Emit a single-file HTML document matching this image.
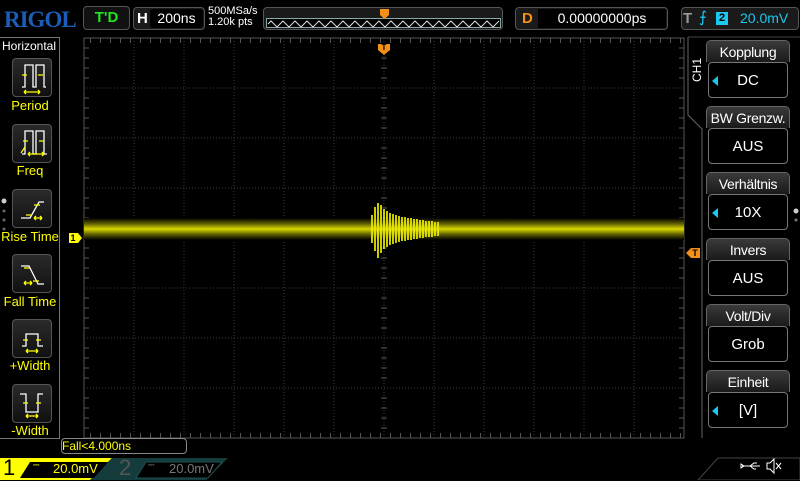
<!DOCTYPE html>
<html><head><meta charset="utf-8"><style>
*{margin:0;padding:0;box-sizing:border-box}
body{width:800px;height:480px;background:#000;overflow:hidden;position:relative;font-family:"Liberation Sans",sans-serif;color:#fff}
.a{position:absolute}
.box{position:absolute;border:1px solid #555;border-radius:4px;background:#0a0a0a}
.lb{position:absolute;left:0;width:60px;text-align:center;color:#ff0;font-size:13px;white-space:nowrap}
.ib{position:absolute;left:12px;width:40px;height:39px;border:1px solid #555;border-radius:4px;background:linear-gradient(#2a2a2a,#111)}
.rt{position:absolute;left:706px;width:84px;height:22px;border:1px solid #666;border-bottom:none;border-radius:5px 5px 0 0;background:linear-gradient(#3a3a3a,#1a1a1a);text-align:center;font-size:14px;line-height:22px;white-space:nowrap;letter-spacing:-0.3px;overflow:hidden}
.rv{position:absolute;left:708px;width:80px;height:36px;border:1px solid #777;border-radius:4px;background:#000;text-align:center;font-size:15px;line-height:36px}
.tri{position:absolute;left:3px;top:13px;width:0;height:0;border-top:5px solid transparent;border-bottom:5px solid transparent;border-right:6px solid #1ac8f0}
</style></head><body>
<div class="a" style="left:4px;top:7px;font-family:'Liberation Serif',serif;font-weight:bold;font-size:23px;color:#1a5eb8;letter-spacing:-1px">RIGOL</div>
<div class="box" style="left:83px;top:6px;width:47px;height:24px;background:#111;color:#1ee81e;font-weight:bold;font-size:15px;text-align:center;line-height:22px">T'D</div>
<div class="box" style="left:133px;top:7px;width:72px;height:23px;background:#1a1a1a"></div>
<div class="a" style="left:137px;top:10px;font-weight:bold;font-size:15px">H</div>
<div class="a" style="left:150px;top:9px;width:53px;height:19px;background:#000;border-radius:3px;font-size:14px;text-align:center;line-height:19px">200ns</div>
<div class="a" style="left:208px;top:6px;font-size:11px;line-height:11px">500MSa/s<br>1.20k pts</div>
<div class="box" style="left:263px;top:7px;width:240px;height:23px;background:#1a1a1a"></div>
<div class="a" style="left:266px;top:18px;width:235px;height:10px;border:1px solid #8aa;background:#000"></div>
<svg class="a" style="left:0;top:0" width="800" height="40"><path d="M268 24 l3 -3 3 3 3 3 3 -3 3 -3 3 3 3 3 3 -3 3 -3 3 3 3 3 3 -3 3 -3 3 3 3 3 3 -3 3 -3 3 3 3 3 3 -3 3 -3 3 3 3 3 3 -3 3 -3 3 3 3 3 3 -3 3 -3 3 3 3 3 3 -3 3 -3 3 3 3 3 3 -3 3 -3 3 3 3 3 3 -3 3 -3 3 3 3 3 3 -3 3 -3 3 3 3 3 3 -3 3 -3 3 3 3 3 3 -3 3 -3 3 3 3 3 3 -3 3 -3 3 3 3 3 3 -3 3 -3 3 3 3 3 3 -3 3 -3 3 3 3 3 3 -3 3 -3 3 3 3 3 3 -3 3 -3 3 3 3 3 3 -3 3 -3" fill="none" stroke="#ddd" stroke-width="1"/><path d="M380 9h9v6l-4.5 4-4.5-4z" fill="#f39018"/></svg>
<div class="box" style="left:515px;top:7px;width:153px;height:23px;background:#1a1a1a"></div>
<div class="a" style="left:522px;top:10px;color:#f39018;font-weight:bold;font-size:15px">D</div>
<div class="a" style="left:538px;top:9px;width:128px;height:19px;background:#000;font-size:14px;text-align:center;line-height:19px">0.00000000ps</div>
<div class="box" style="left:681px;top:7px;width:118px;height:23px;background:#1a1a1a"></div>
<div class="a" style="left:683px;top:10px;color:#999;font-weight:bold;font-size:15px">T</div>
<div class="a" style="left:699px;top:8px;color:#1ac8f0;font-size:15px">⨍</div>
<div class="a" style="left:716px;top:12px;width:12px;height:13px;background:#1ac8f0;color:#000;font-size:11px;font-weight:bold;text-align:center;line-height:13px">2</div>
<div class="a" style="left:740px;top:10px;color:#1ac8f0;font-size:14px">20.0mV</div>

<div class="a" style="left:0;top:37px;width:60px;height:402px;border:1px solid #777;border-left:none"></div>
<div class="a" style="left:2px;top:39px;font-size:12px">Horizontal</div>
<div class="ib" style="top:58px"></div><div class="lb" style="top:98px">Period</div>
<div class="ib" style="top:124px"></div><div class="lb" style="top:163px">Freq</div>
<div class="ib" style="top:189px"></div><div class="lb" style="top:229px">Rise Time</div>
<div class="ib" style="top:254px"></div><div class="lb" style="top:294px">Fall Time</div>
<div class="ib" style="top:319px"></div><div class="lb" style="top:358px">+Width</div>
<div class="ib" style="top:384px"></div><div class="lb" style="top:423px">-Width</div>
<svg class="a" style="left:0;top:0" width="60" height="440" fill="none" stroke-width="1.3">
<g stroke="#fff"><path d="M22 87h3V65h8v22h3V65h8v22h2"/><path d="M22 154h3V131h8v23h3V131h8v23h3"/><path d="M21 218h9l9-16h5"/><path d="M21 266h8l9 18h6"/><path d="M22 346h4v-12h12v12h5"/><path d="M20 394h6v18h12v-18h5"/></g>
<g stroke="#ff0"><path d="M22 75h5M38 75h5M24 92h16M24 92l2-2M24 92l2 2M40 92l-2-2M40 92l-2 2"/><path d="M23 141h5M39 141h5M28 154h16M28 154l2-2M28 154l2 2M44 154l-2-2M44 154l-2 2M21 153l4-6"/><path d="M26 215h6M34 205h6M34 218h8M34 218l2-2M34 218l2 2M42 218l-2-2M42 218l-2 2"/><path d="M24 268h6M33 281h6M24 283h8M24 283l2-2M24 283l2 2M32 283l-2-2M32 283l-2 2"/><path d="M23 340h5M36 340h5M26 351h12M26 351l2-2M26 351l2 2M38 351l-2-2M38 351l-2 2"/><path d="M23 403h5M36 403h5M26 416h12M26 416l2-2M26 416l2 2M38 416l-2-2M38 416l-2 2"/></g>
<circle cx="4" cy="201" r="2.5" fill="#ccc"/><circle cx="4" cy="211" r="1.5" fill="#666"/><circle cx="4" cy="220" r="1.5" fill="#666"/><circle cx="4" cy="229" r="1.5" fill="#666"/>
</svg>

<svg class="a" style="left:0;top:0" width="800" height="480">
<defs><linearGradient id="g" x1="0" y1="0" x2="0" y2="1"><stop offset="0" stop-color="#000"/><stop offset=".25" stop-color="#5a5a00"/><stop offset=".5" stop-color="#d8d800"/><stop offset=".75" stop-color="#5a5a00"/><stop offset="1" stop-color="#000"/></linearGradient>
<pattern id="mx" width="10" height="5" patternUnits="userSpaceOnUse"><rect width="1" height="5" fill="#555"/></pattern></defs>
<rect x="84" y="38" width="600" height="400" fill="none" stroke="#555"/>
<g stroke="#3c3c3c" stroke-dasharray="1 2">
<path d="M134 38v400M184 38v400M234 38v400M284 38v400M334 38v400M384 38v400M434 38v400M484 38v400M534 38v400M584 38v400M634 38v400"/>
<path d="M84 88h600M84 138h600M84 188h600M84 238h600M84 288h600M84 338h600M84 388h600"/></g>
<rect x="84" y="38" width="600" height="5" fill="url(#mx)"/>
<rect x="84" y="433" width="600" height="5" fill="url(#mx)"/>
<g stroke="#555"><path d="M84 48h5M84 58h5M84 68h5M84 78h5M84 98h5M84 108h5M84 118h5M84 128h5M84 148h5M84 158h5M84 168h5M84 178h5M84 198h5M84 208h5M84 218h5M84 228h5M84 248h5M84 258h5M84 268h5M84 278h5M84 298h5M84 308h5M84 318h5M84 328h5M84 348h5M84 358h5M84 368h5M84 378h5M84 398h5M84 408h5M84 418h5M84 428h5"/>
<path d="M679 48h5M679 58h5M679 68h5M679 78h5M679 98h5M679 108h5M679 118h5M679 128h5M679 148h5M679 158h5M679 168h5M679 178h5M679 198h5M679 208h5M679 218h5M679 228h5M679 248h5M679 258h5M679 268h5M679 278h5M679 298h5M679 308h5M679 318h5M679 328h5M679 348h5M679 358h5M679 368h5M679 378h5M679 398h5M679 408h5M679 418h5M679 428h5"/>
<path d="M381 48h6M381 58h6M381 68h6M381 78h6M381 98h6M381 108h6M381 118h6M381 128h6M381 148h6M381 158h6M381 168h6M381 178h6M381 198h6M381 208h6M381 218h6M381 228h6M381 248h6M381 258h6M381 268h6M381 278h6M381 298h6M381 308h6M381 318h6M381 328h6M381 348h6M381 358h6M381 368h6M381 378h6M381 398h6M381 408h6M381 418h6M381 428h6"/></g>
<rect x="84" y="218" width="600" height="22" fill="url(#g)"/>
<path d="M372 215V243M375 207V251M378 203V258M381 205V253M384 209V249M387 211V247M390 213V245M393 214V244M396 215V243M399 216V242M402 217V241M405 217V241M408 218V240M411 218V240M414 219V239M417 219V239M420 220V238M423 220V238M426 221V237M429 221V237M432 221V237M435 222V236M438 222V236" stroke="#ee0" stroke-width="2" opacity=".85"/>
<path d="M378 44h12v6l-6 5-6-5z" fill="#f39018"/><text x="384" y="50" font-size="8" font-weight="bold" text-anchor="middle" fill="#000" font-family="Liberation Sans">T</text>
<path d="M69 233h9l4 5-4 5h-9z" fill="#ff0"/><text x="73" y="241" font-size="9" font-weight="bold" text-anchor="middle" fill="#000" font-family="Liberation Sans">1</text>
<path d="M700 248h-9l-5 5 5 5h9z" fill="#f39018"/><text x="695" y="256" font-size="9" font-weight="bold" text-anchor="middle" fill="#000" font-family="Liberation Sans">T</text>
<path d="M688 37V115l14 14V438" fill="none" stroke="#666"/>
<path d="M688 37h112" stroke="#444"/>
<circle cx="796" cy="211" r="2.5" fill="#ccc"/><circle cx="796" cy="220" r="1.5" fill="#777"/>
<text transform="translate(701,70) rotate(-90)" font-size="12" fill="#fff" text-anchor="middle" font-family="Liberation Sans">CH1</text>
<path d="M0 458h112l-22 22H0z" fill="#ff0"/>
<path d="M112 458h116l-22 22H90z" fill="#143c3c"/>
<path d="M30 462h78l-14 16H20z" fill="#000"/>
<path d="M146 462h76l-14 16H136z" fill="#000" stroke="#1d5050"/>
<path d="M718 458h82v22h-102z" fill="#000" stroke="#444"/>
<path d="M742 466h18M744 466l-3-2v4zM750 466l4-3h3M750 466l4 3h2" stroke="#fff" fill="none"/>
<path d="M767 463h3l4-4v14l-4-4h-3z" fill="none" stroke="#fff"/><path d="M776 463l5 6M781 463l-5 6" stroke="#fff"/>
</svg>
<div class="a" style="left:61px;top:438px;width:126px;height:16px;border:1px solid #888;border-radius:4px;color:#ff0;font-size:12px;line-height:14px">Fall&lt;4.000ns</div>
<div class="a" style="left:3px;top:455px;color:#000;font-size:22px">1</div>
<div class="a" style="left:33px;top:460px;color:#ff0;font-size:8px">⎓</div>
<div class="a" style="left:53px;top:461px;color:#ff0;font-size:13px">20.0mV</div>
<div class="a" style="left:119px;top:455px;color:#555;font-size:22px">2</div>
<div class="a" style="left:148px;top:460px;color:#777;font-size:8px">⎓</div>
<div class="a" style="left:169px;top:461px;color:#777;font-size:13px">20.0mV</div>

<div class="rt" style="top:40px">Kopplung</div><div class="rv" style="top:62px"><span class="tri"></span>DC</div>
<div class="rt" style="top:106px">BW Grenzw.</div><div class="rv" style="top:128px">AUS</div>
<div class="rt" style="top:172px">Verhältnis</div><div class="rv" style="top:194px"><span class="tri"></span>10X</div>
<div class="rt" style="top:238px">Invers</div><div class="rv" style="top:260px">AUS</div>
<div class="rt" style="top:304px">Volt/Div</div><div class="rv" style="top:326px">Grob</div>
<div class="rt" style="top:370px">Einheit</div><div class="rv" style="top:392px"><span class="tri"></span>[V]</div>
</body></html>
